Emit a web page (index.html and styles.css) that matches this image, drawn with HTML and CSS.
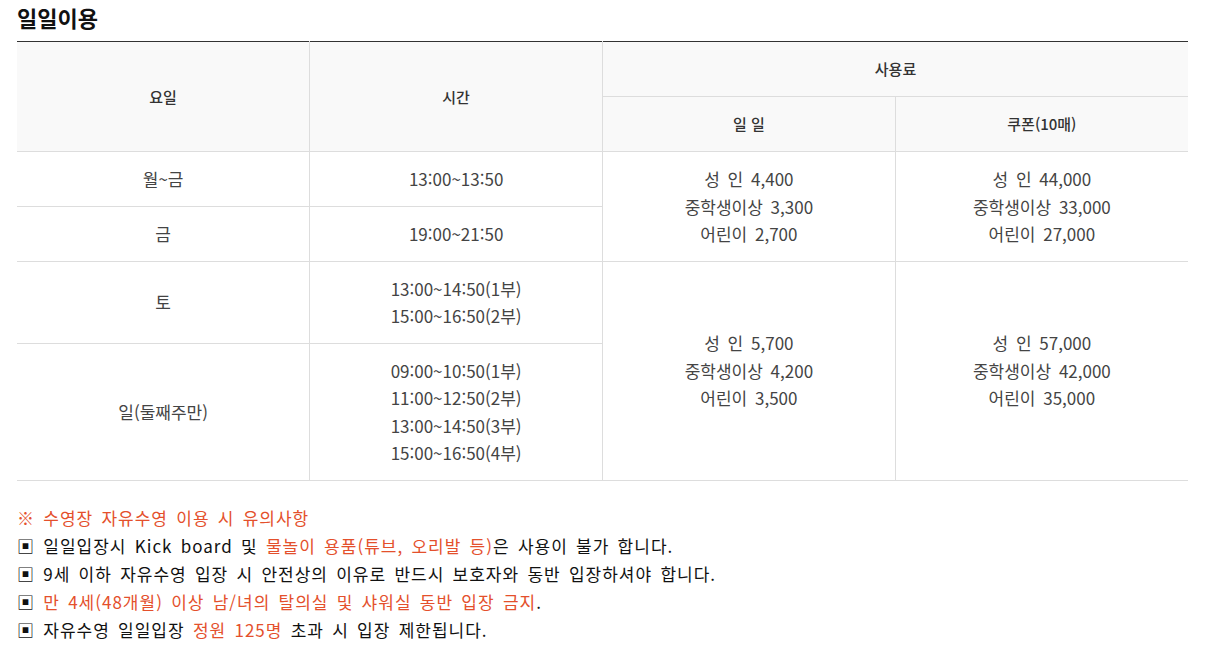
FILE: index.html
```html
<!DOCTYPE html>
<html lang="ko">
<head>
<meta charset="UTF-8">
<title>일일이용</title>
<link rel="stylesheet" href="styles.css">
</head>
<body>
<h3 class="title">일일이용</h3>
<table class="fee">
	<colgroup>
		<col class="c"><col class="c"><col class="c"><col class="c">
	</colgroup>
	<thead>
		<tr class="top">
			<th rowspan="2">요일</th>
			<th rowspan="2">시간</th>
			<th colspan="2">사용료</th>
		</tr>
		<tr>
			<th>일 일</th>
			<th>쿠폰(10매)</th>
		</tr>
	</thead>
	<tbody>
		<tr>
			<td>월~금</td>
			<td>13:00~13:50</td>
			<td rowspan="2">성 인 4,400<br>중학생이상 3,300<br>어린이 2,700</td>
			<td rowspan="2">성 인 44,000<br>중학생이상 33,000<br>어린이 27,000</td>
		</tr>
		<tr>
			<td>금</td>
			<td>19:00~21:50</td>
		</tr>
		<tr>
			<td>토</td>
			<td>13:00~14:50(1부)<br>15:00~16:50(2부)</td>
			<td rowspan="2">성 인 5,700<br>중학생이상 4,200<br>어린이 3,500</td>
			<td rowspan="2">성 인 57,000<br>중학생이상 42,000<br>어린이 35,000</td>
		</tr>
		<tr>
			<td>일(둘째주만)</td>
			<td>09:00~10:50(1부)<br>11:00~12:50(2부)<br>13:00~14:50(3부)<br>15:00~16:50(4부)</td>
		</tr>
	</tbody>
</table>
<ul class="notes">
	<li class="red">※ 수영장 자유수영 이용 시 유의사항</li>
	<li>▣ 일일입장시 Kick board 및 <span class="red">물놀이 용품(튜브, 오리발 등)</span>은 사용이 불가 합니다.</li>
	<li>▣ 9세 이하 자유수영 입장 시 안전상의 이유로 반드시 보호자와 동반 입장하셔야 합니다.</li>
	<li>▣ <span class="red">만 4세(48개월) 이상 남/녀의 탈의실 및 샤워실 동반 입장 금지</span>.</li>
	<li>▣ 자유수영 일일입장 <span class="red">정원 125명</span> 초과 시 입장 제한됩니다.</li>
</ul>
</body>
</html>
```
FILE: styles.css
```css
body {
	margin: 0;
	padding: 0 17px;
	font-family: "Noto Sans CJK KR", "Noto Sans", sans-serif;
	color: #333333;
	background: #ffffff;
}
.title {
	margin: 0;
	padding-top: 2px;
	font-size: 22px;
	line-height: 30px;
	font-weight: bold;
	color: #111111;
}
.fee {
	width: 100%;
	margin-top: 9px;
	border-collapse: collapse;
	table-layout: fixed;
}
.fee .c {
	width: 25%;
}
.fee th,
.fee td {
	border: 1px solid #dddddd;
	text-align: center;
	vertical-align: middle;
}
.fee .top th {
	border-top: 1px solid #333333;
}
.fee tr > :first-child {
	border-left: 0;
}
.fee tr > :last-child {
	border-right: 0;
}
.fee th {
	background: #f9f9f9;
	font-size: 15px;
	font-weight: 500;
	color: #333333;
	height: 54px;
	padding: 0 10px;
	line-height: 20px;
}
.fee td {
	font-size: 17px;
	line-height: 27.5px;
	word-spacing: 3px;
	padding: 13px 10px;
	color: #444444;
}
.notes {
	list-style: none;
	margin: 23px 0 0;
	padding: 0;
	font-size: 17px;
	line-height: 28px;
	letter-spacing: 1px;
	word-spacing: 2.5px;
	color: #111111;
}
.red {
	color: #e4502c;
}
```
